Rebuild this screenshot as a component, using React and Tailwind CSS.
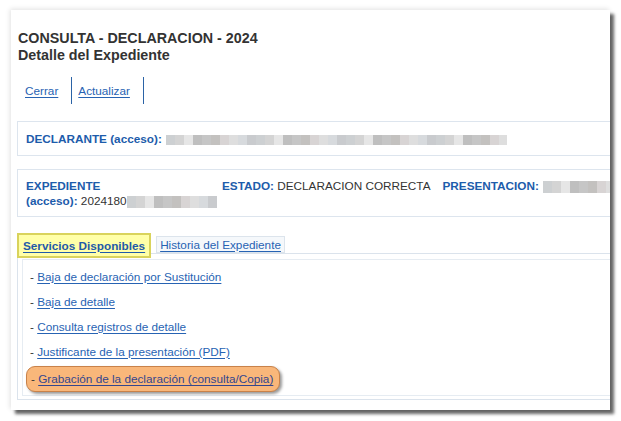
const BLUE = "text-[#1d5cab]";

const GREYS = ["#d4d4d4", "#c6c6c6", "#dedede", "#cdd0d2", "#bfbfbf", "#d8d4d4", "#c9cbce", "#e6e6e6", "#c3c1bf", "#d7dadd"];

function Blur({ w, h = 10 }) {
  const n = Math.ceil(w / 9);
  return (
    <span className="inline-flex align-middle overflow-hidden" style={{ width: w, height: h }}>
      {Array.from({ length: n }).map((_, i) => (
        <span key={i} className="shrink-0 h-full w-[9px]" style={{ background: GREYS[(i * 7 + 3) % GREYS.length] }} />
      ))}
    </span>
  );
}

function Item({ children }) {
  return (
    <div className="h-[25px] flex items-center pl-[7px] text-[11.75px] text-[#333]">
      <span>-&nbsp;</span>
      <a className="text-[#2763b3] underline underline-offset-2">{children}</a>
    </div>
  );
}

export default function App() {
  return (
    <div className="w-[621px] h-[421px] bg-white pt-[10px] pl-[11px]" style={{ fontFamily: '"Liberation Sans", Arial, sans-serif' }}>
      <div className="w-[599px] h-[400px] bg-white overflow-hidden pl-[6px] pt-[20px] shadow-[4px_4px_3px_rgba(0,0,0,0.6),_-1px_-1px_5px_rgba(0,0,0,0.12)]">
        <div className="pl-[1px] text-[14.3px] leading-[17px] font-bold text-[#333]">
          <div>CONSULTA - DECLARACION - 2024</div>
          <div>Detalle del Expediente</div>
        </div>

        <div className="mt-[13px] flex h-[27px] text-[11.75px]">
          <div className="flex items-center pl-[8px] pr-[13px] border-r border-[#2b63a6]">
            <a className="text-[#2763b3] underline underline-offset-2">Cerrar</a>
          </div>
          <div className="flex items-center pl-[6px] pr-[13px] border-r border-[#2b63a6]">
            <a className="text-[#2763b3] underline underline-offset-2">Actualizar</a>
          </div>
        </div>

        <div className="mt-[17px] w-[610px] h-[35px] border border-[#dde5ee] flex items-center pl-[8px] text-[11.75px]">
          <span className={`font-bold ${BLUE}`}>DECLARANTE (acceso):</span>
          <span className="ml-[4px]"><Blur w={341} /></span>
        </div>

        <div className="mt-[13px] w-[610px] h-[48px] border border-[#dde5ee] flex items-center pl-[8px] text-[11.75px] leading-[15px] text-[#333]">
          <div className="w-[196px]">
            <div className={`font-bold ${BLUE}`}>EXPEDIENTE</div>
            <div>
              <span className={`font-bold ${BLUE}`}>(acceso):</span> 2024180<Blur w={90} h={12} />
            </div>
          </div>
          <div className="self-start mt-[8px] flex">
            <span><span className={`font-bold ${BLUE}`}>ESTADO:</span> DECLARACION CORRECTA</span>
            <span className="ml-[12px]"><span className={`font-bold ${BLUE}`}>PRESENTACION:</span></span>
            <span className="ml-[4px]"><Blur w={68} h={12} /></span>
          </div>
        </div>

        <div className="mt-[16px] flex items-start h-[20px] text-[11.75px]">
          <div className="relative z-10 h-[25px] px-[4px] flex items-center bg-[#ffffa8] border-2 border-[#d9d35c]">
            <a className="font-bold text-[#1f5aa8] underline underline-offset-2">Servicios Disponibles</a>
          </div>
          <div className="ml-[5px] mt-[3px] h-[17px] px-[3px] flex items-center bg-[#f5f8fb] border border-[#dce4ec]">
            <a className="text-[#2763b3] underline underline-offset-2">Historia del Expediente</a>
          </div>
        </div>

        <div className="w-[610px] border border-[#dbe3ec] pl-[4px] pt-[5px] pb-[3px]">
          <div className="border border-[#e6ecf2] pt-[4px] pb-[3px]">
            <Item>Baja de declaración por Sustitución</Item>
            <Item>Baja de detalle</Item>
            <Item>Consulta registros de detalle</Item>
            <Item>Justificante de la presentación (PDF)</Item>
            <div className="mt-[2px] ml-[3px] w-[254px] h-[26px] flex items-center pl-[4px] text-[11.75px] text-[#333] bg-[#f9b77a] border border-[#c8824a] rounded-[9px] shadow-[2px_2px_3px_rgba(0,0,0,0.4)]">
              <span>-&nbsp;</span>
              <a className="text-[#34468e] underline underline-offset-2">Grabación de la declaración (consulta/Copia)</a>
            </div>
          </div>
        </div>
      </div>
    </div>
  );
}
